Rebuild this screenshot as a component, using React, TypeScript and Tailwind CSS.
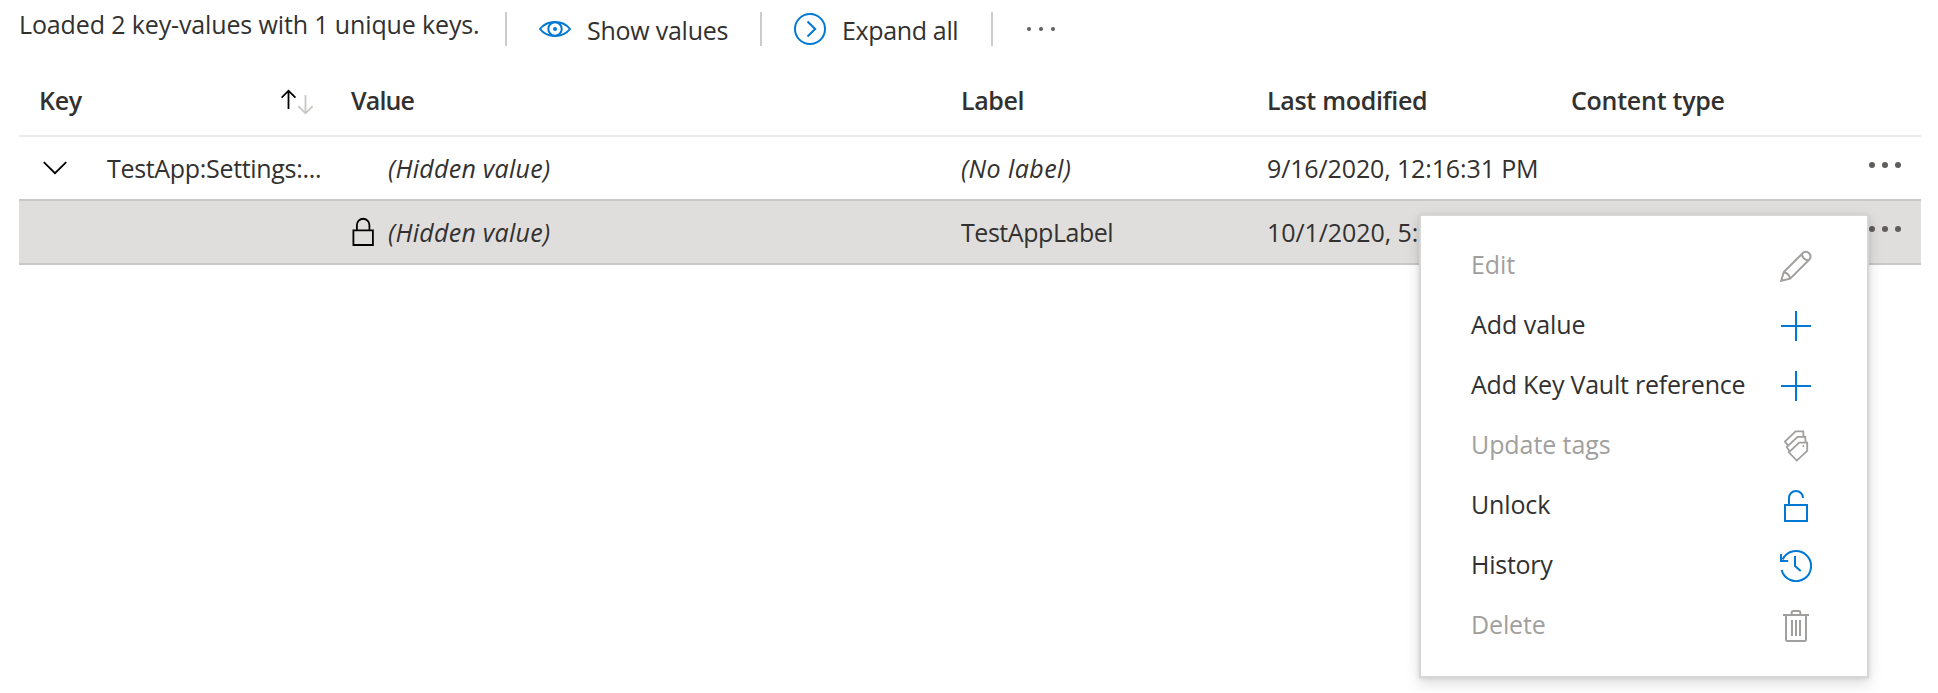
import type { ReactNode } from "react";

function Svg({ w = 32, h = 32, className = "", children }: { w?: number; h?: number; className?: string; children: ReactNode }) {
  return (
    <svg width={w} height={h} viewBox={`0 0 ${w} ${h}`} fill="none" stroke="currentColor" strokeWidth="2" className={`shrink-0 ${className}`}>
      {children}
    </svg>
  );
}

const EyeIcon = () => (
  <Svg className="text-[#0078d4]">
    <path d="M1 16C4.500 11.500 9.500 9 16 9s11.500 2.500 15 7c-3.500 4.500-8.500 7-15 7S4.500 20.500 1 16z" />
    <circle cx="16" cy="16" r="6.700" />
    <circle cx="16" cy="16" r="2" fill="currentColor" stroke="none" />
  </Svg>
);

const ExpandIcon = () => (
  <Svg className="text-[#0078d4]">
    <circle cx="16" cy="16" r="15" />
    <path d="M13.500 8.500L21.200 16l-7.700 7.500" />
  </Svg>
);

const SortIcon = () => (
  <Svg w={32} h={26} className="text-black">
    <path strokeWidth="1.800" d="M7.500 20V2M.6 8.600L7.500 1.700l6.900 6.900" />
    <path strokeWidth="1.800" className="text-[#c8c6c4]" stroke="currentColor" d="M24.500 6v18M17.300 17.100l7.200 7.200 7.200-7.200" />
  </Svg>
);

const ChevronIcon = () => (
  <Svg w={24} h={14} className="text-black">
    <path strokeWidth="1.800" d="M.8 1.200L12 12.200 23.200 1.200" />
  </Svg>
);

const LockIcon = () => (
  <Svg w={22} h={30} className="text-black">
    <path strokeWidth="1.800" d="M1.400 13.300h19.500v14.700h-19.500zM4.900 13.300V8a6.250 6.250 0 0 1 12.500 0v5.300" />
  </Svg>
);

const PencilIcon = () => (
  <Svg>
    <path d="M1.200 30.800L3.800 22 23.200 2.700a4.700 4.700 0 0 1 6.500 6.500L10.200 28.600z" />
    <path d="M21.800 4.100c.5 3.400 2.800 5.700 6.500 6.500M3.800 22.300c3.400.6 5.500 2.700 6.200 6.200" />
  </Svg>
);

const PlusIcon = () => (
  <Svg>
    <path d="M16 1v30M1 16h30" />
  </Svg>
);

const TagsIcon = () => (
  <Svg>
    <path strokeWidth="1.800" d="M19.200 12.600H27.200v8.300L16.800 30.600 8.800 22.300z" />
    <path strokeWidth="1.800" d="M25.600 12.600L25.200 6.900H17.500L6.700 17.200l3 4" />
    <path strokeWidth="1.800" d="M23.500 6.900L23.300 1.300H15.600L4.900 11.600l3.200 4" />
    <circle cx="23.300" cy="16" r="1" fill="currentColor" stroke="none" />
  </Svg>
);

const UnlockIcon = () => (
  <Svg>
    <path d="M5 15h22v16H5zM9 15V8a7 7 0 0 1 14 0" />
  </Svg>
);

const HistoryIcon = () => (
  <Svg>
    <path d="M1.600 20A15 15 0 1 0 2.600 9.500M1 4v7h7.200M15 6v10l5.700 5" />
  </Svg>
);

const TrashIcon = () => (
  <Svg>
    <path d="M3 5h26M11.700 5V2.500a1.500 1.500 0 0 1 1.500-1.500h5.600a1.500 1.500 0 0 1 1.500 1.500V5" />
    <path d="M6 5v24.500a1.500 1.500 0 0 0 1.500 1.500h17a1.500 1.500 0 0 0 1.500-1.500V5M12 10v16M16 10v16M20 10v16" />
  </Svg>
);

const Separator = () => <div className="mt-3 h-[34px] w-[2px] shrink-0 bg-[#cccccc]" />;

const RowMenuButton = () => (
  <button className="mb-1.5 ml-[18px] flex items-center gap-[7px]">
    <span className="size-1.5 rounded-full bg-[#605e5c]" />
    <span className="size-1.5 rounded-full bg-[#605e5c]" />
    <span className="size-1.5 rounded-full bg-[#605e5c]" />
  </button>
);

const grid = "grid grid-cols-[332px_610px_306px_304px_280px_70px] items-center border-b-2";

const menu = [
  { label: "Edit", icon: <PencilIcon />, disabled: true, spacing: "tracking-[-0.1px]" },
  { label: "Add value", icon: <PlusIcon />, disabled: false, spacing: "tracking-[-0.05px]" },
  { label: "Add Key Vault reference", icon: <PlusIcon />, disabled: false, spacing: "tracking-[-0.22px]" },
  { label: "Update tags", icon: <TagsIcon />, disabled: true, spacing: "tracking-[-0.08px]" },
  { label: "Unlock", icon: <UnlockIcon />, disabled: false, spacing: "tracking-[-0.15px]" },
  { label: "History", icon: <HistoryIcon />, disabled: false, spacing: "tracking-[-0.25px]" },
  { label: "Delete", icon: <TrashIcon />, disabled: true, spacing: "tracking-[-0.15px]" },
];

export default function App() {
  return (
    <div className="relative h-[693px] w-[1938px] overflow-hidden bg-white pl-[19px] font-['Open_Sans','Noto_Sans',sans-serif] text-[25px] leading-[34px] whitespace-nowrap text-[#323130]">
      <div className="flex h-[66px] items-start">
        <div className="mt-[7px] w-[486px] tracking-[-0.13px]">Loaded 2 key-values with 1 unique keys.</div>
        <Separator />
        <button className="ml-8 flex w-[221px] items-start">
          <span className="mt-[13px]"><EyeIcon /></span>
          <span className="mt-[13px] ml-4 tracking-[-0.25px]">Show values</span>
        </button>
        <Separator />
        <button className="ml-8 flex w-[197px] items-start">
          <span className="mt-[13px]"><ExpandIcon /></span>
          <span className="mt-[13px] ml-4 tracking-[-0.35px]">Expand all</span>
        </button>
        <Separator />
        <button className="mt-[27px] ml-[33.5px] flex gap-2">
          <span className="size-1 rounded-full bg-[#605e5c]" />
          <span className="size-1 rounded-full bg-[#605e5c]" />
          <span className="size-1 rounded-full bg-[#605e5c]" />
        </button>
      </div>

      <div className="w-[1902px]">
        <div className={`${grid} h-[71px] border-[#eaeaea] font-semibold`}>
          <div className="flex items-center justify-between pr-[38px] pl-5">
            <span className="-mt-0.5 tracking-[-0.3px]">Key</span>
            <span className="mt-0.5"><SortIcon /></span>
          </div>
          <div className="-mt-0.5 tracking-[-0.85px]">Value</div>
          <div className="-mt-0.5 tracking-[-0.4px]">Label</div>
          <div className="-mt-0.5 tracking-[-0.3px]">Last modified</div>
          <div className="-mt-0.5 tracking-[-0.25px]">Content type</div>
        </div>

        <div className={`${grid} h-16 border-[#c8c8c8]`}>
          <div className="flex items-center pl-6">
            <ChevronIcon />
            <span className="ml-10 tracking-[-0.32px]">TestApp:Settings:...</span>
          </div>
          <div className="pl-[37px] tracking-[0.27px] italic">(Hidden value)</div>
          <div className="tracking-[0.43px] italic">(No label)</div>
          <div className="tracking-[-0.13px]">9/16/2020, 12:16:31 PM</div>
          <div />
          <RowMenuButton />
        </div>

        <div className={`${grid} h-16 border-[#c8c8c8] bg-[#e0dedd]`}>
          <div />
          <div className="flex items-center pl-px">
            <LockIcon />
            <span className="ml-3.5 tracking-[0.27px] italic">(Hidden value)</span>
          </div>
          <div className="tracking-[-0.45px]">TestAppLabel</div>
          <div className="tracking-[-0.08px]">10/1/2020, 5:</div>
          <div />
          <RowMenuButton />
        </div>
      </div>

      <div className="absolute top-[214px] left-[1419px] h-[464px] w-[450px] border-2 border-[#d6d6d6] bg-white py-5 shadow-[0_6px_14px_rgba(0,0,0,0.13),0_1px_4px_rgba(0,0,0,0.11)]">
        {menu.map((item) => (
          <button
            key={item.label}
            disabled={item.disabled}
            className={`flex h-[60px] w-full items-center justify-between pr-[55px] pl-[50px] ${item.disabled ? "text-[#a19f9d]" : ""}`}
          >
            <span className={`-mt-1 ${item.spacing}`}>{item.label}</span>
            <span className={item.disabled ? "" : "text-[#0078d4]"}>{item.icon}</span>
          </button>
        ))}
      </div>
    </div>
  );
}
